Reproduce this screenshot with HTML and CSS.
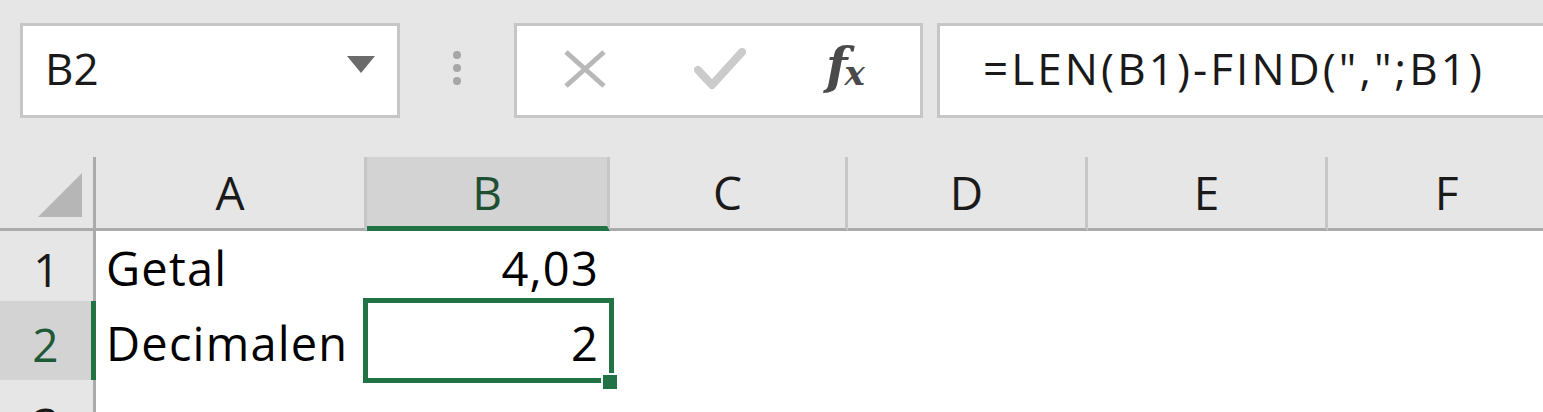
FILE: index.html
```html
<!DOCTYPE html>
<html lang="nl">
<head>
<meta charset="utf-8">
<title>Excel</title>
<link rel="stylesheet" href="styles.css">
</head>
<body>
<div class="bar">
  <div class="namebox">
    <span class="name">B2</span>
    <svg class="drop" width="28" height="17" viewBox="0 0 28 17"><polygon points="0,0 28,0 14,17" fill="#6b6b6b"/></svg>
  </div>
  <div class="grip"><span></span><span></span><span></span></div>
  <div class="fnbox">
    <svg class="ic-x" width="44" height="40" viewBox="0 0 44 40"><path d="M3 3 L41 37 M41 3 L3 37" stroke="#b8b8b8" stroke-width="5" fill="none"/></svg>
    <svg class="ic-ok" width="52" height="44" viewBox="0 0 52 44"><path d="M4 23 L18 38 L48 5" stroke="#cbcbcb" stroke-width="8" fill="none" stroke-linejoin="round" stroke-linecap="round"/></svg>
    <span class="fx">f<span class="fx-x">x</span></span>
  </div>
  <div class="formula">=LEN(B1)-FIND(",";B1)</div>
</div>
<div class="sheet">
  <div class="corner"><svg width="44" height="44" viewBox="0 0 44 44"><polygon points="44,0 44,44 0,44" fill="#b6b6b6"/></svg></div>
  <div class="colhdr">A</div>
  <div class="colhdr sel">B</div>
  <div class="colhdr">C</div>
  <div class="colhdr">D</div>
  <div class="colhdr">E</div>
  <div class="colhdr">F</div>

  <div class="rowhdr r1">1</div>
  <div class="cell r1">Getal</div>
  <div class="cell r1 num">4,03</div>
  <div class="cell r1"></div>
  <div class="cell r1"></div>
  <div class="cell r1"></div>
  <div class="cell r1"></div>

  <div class="rowhdr r2 sel">2</div>
  <div class="cell r2">Decimalen</div>
  <div class="cell r2 num active">2<span class="selbox"></span><span class="handle"></span></div>
  <div class="cell r2"></div>
  <div class="cell r2"></div>
  <div class="cell r2"></div>
  <div class="cell r2"></div>

  <div class="rowhdr r3">3</div>
  <div class="cell r3"></div>
  <div class="cell r3"></div>
  <div class="cell r3"></div>
  <div class="cell r3"></div>
  <div class="cell r3"></div>
  <div class="cell r3"></div>
</div>
</body>
</html>
```
FILE: styles.css
```css
html, body {
  margin: 0;
  padding: 0;
  overflow: hidden;
  background: #e6e6e6;
  font-family: "Open Sans", "DejaVu Sans", sans-serif;
}

.bar {
  display: flex;
  align-items: stretch;
  padding: 23px 0 0 20px;
  height: 95px;
  width: 1700px;
}

.namebox {
  box-sizing: border-box;
  width: 380px;
  height: 95px;
  background: #fff;
  border: 3px solid #c6c6c6;
  display: flex;
  align-items: center;
  justify-content: space-between;
  padding: 0 22px 6px 22px;
}

.name {
  font-size: 44px;
  color: #1a1a1a;
  line-height: 1;
}

.drop {
  margin-top: -6px;
}

.grip {
  width: 114px;
  display: flex;
  flex-direction: column;
  align-items: center;
  justify-content: center;
  gap: 5px;
  padding-bottom: 6px;
  box-sizing: border-box;
}

.grip span {
  width: 8px;
  height: 8px;
  border-radius: 50%;
  background: #a6a6a6;
}

.fnbox {
  box-sizing: border-box;
  width: 409px;
  height: 95px;
  background: #fff;
  border: 3px solid #c6c6c6;
  display: flex;
  align-items: center;
  padding: 0 0 0 46px;
}

.ic-x {
  margin-top: -4px;
}

.ic-ok {
  margin-left: 87px;
  margin-top: -4px;
}

.fx {
  margin-left: 80px;
  font-family: "DejaVu Serif", "Liberation Serif", serif;
  font-style: italic;
  font-weight: bold;
  font-size: 50px;
  color: #4a4a4a;
  line-height: 1;
  margin-top: -10px;
  letter-spacing: -3px;
}

.fx-x {
  font-size: 34px;
  position: relative;
  top: 2px;
}

.formula {
  box-sizing: border-box;
  margin-left: 14px;
  width: 760px;
  height: 95px;
  background: #fff;
  border: 3px solid #c6c6c6;
  display: flex;
  align-items: center;
  padding: 0 0 6px 43px;
  font-size: 44px;
  letter-spacing: 3.1px;
  color: #1a1a1a;
  line-height: 1;
  white-space: nowrap;
}

.sheet {
  margin-top: 39px;
  display: grid;
  grid-template-columns: 96px 271px 243px 238px 240px 240px 240px;
  grid-template-rows: 74px 70px 79px 80px;
  width: 1568px;
  background: #fff;
}

.corner {
  background: #e6e6e6;
  border-right: 3px solid #ababab;
  border-bottom: 3px solid #ababab;
  display: flex;
  align-items: flex-end;
  padding: 0 11px 11px 0;
  justify-content: flex-end;
}

.colhdr {
  background: #e6e6e6;
  border-right: 3px solid #c6c6c6;
  border-bottom: 3px solid #ababab;
  display: flex;
  align-items: center;
  justify-content: center;
  font-size: 46px;
  line-height: 1;
  color: #1a1a1a;
  padding-bottom: 2px;
}

.colhdr.sel {
  background: #d3d3d3;
  border-bottom: 5px solid #217346;
  color: #1f4f33;
  padding-bottom: 0;
}

.rowhdr {
  background: #e6e6e6;
  border-right: 3px solid #ababab;
  display: flex;
  align-items: flex-end;
  justify-content: center;
  font-size: 46px;
  line-height: 1;
  color: #1a1a1a;
}

.rowhdr.sel {
  background: #d3d3d3;
  border-right: 5px solid #217346;
  color: #1f5a38;
}

.cell {
  display: flex;
  align-items: flex-end;
  padding: 0 12px 0 10px;
  font-size: 47px;
  letter-spacing: 1.2px;
  line-height: 1;
  color: #000;
  white-space: nowrap;
}

.r1 { padding-bottom: 9px; }
.r2 { padding-bottom: 13px; }
.r3 { padding-bottom: 13px; }

.num {
  justify-content: flex-end;
  padding-right: 11px;
}

.active {
  position: relative;
}

.selbox {
  position: absolute;
  left: -4px;
  top: -3px;
  right: -4px;
  bottom: -3px;
  border: 5px solid #217346;
}

.handle {
  position: absolute;
  right: -9px;
  bottom: -11px;
  width: 14px;
  height: 14px;
  background: #217346;
  border: 2px solid #fff;
}
```
